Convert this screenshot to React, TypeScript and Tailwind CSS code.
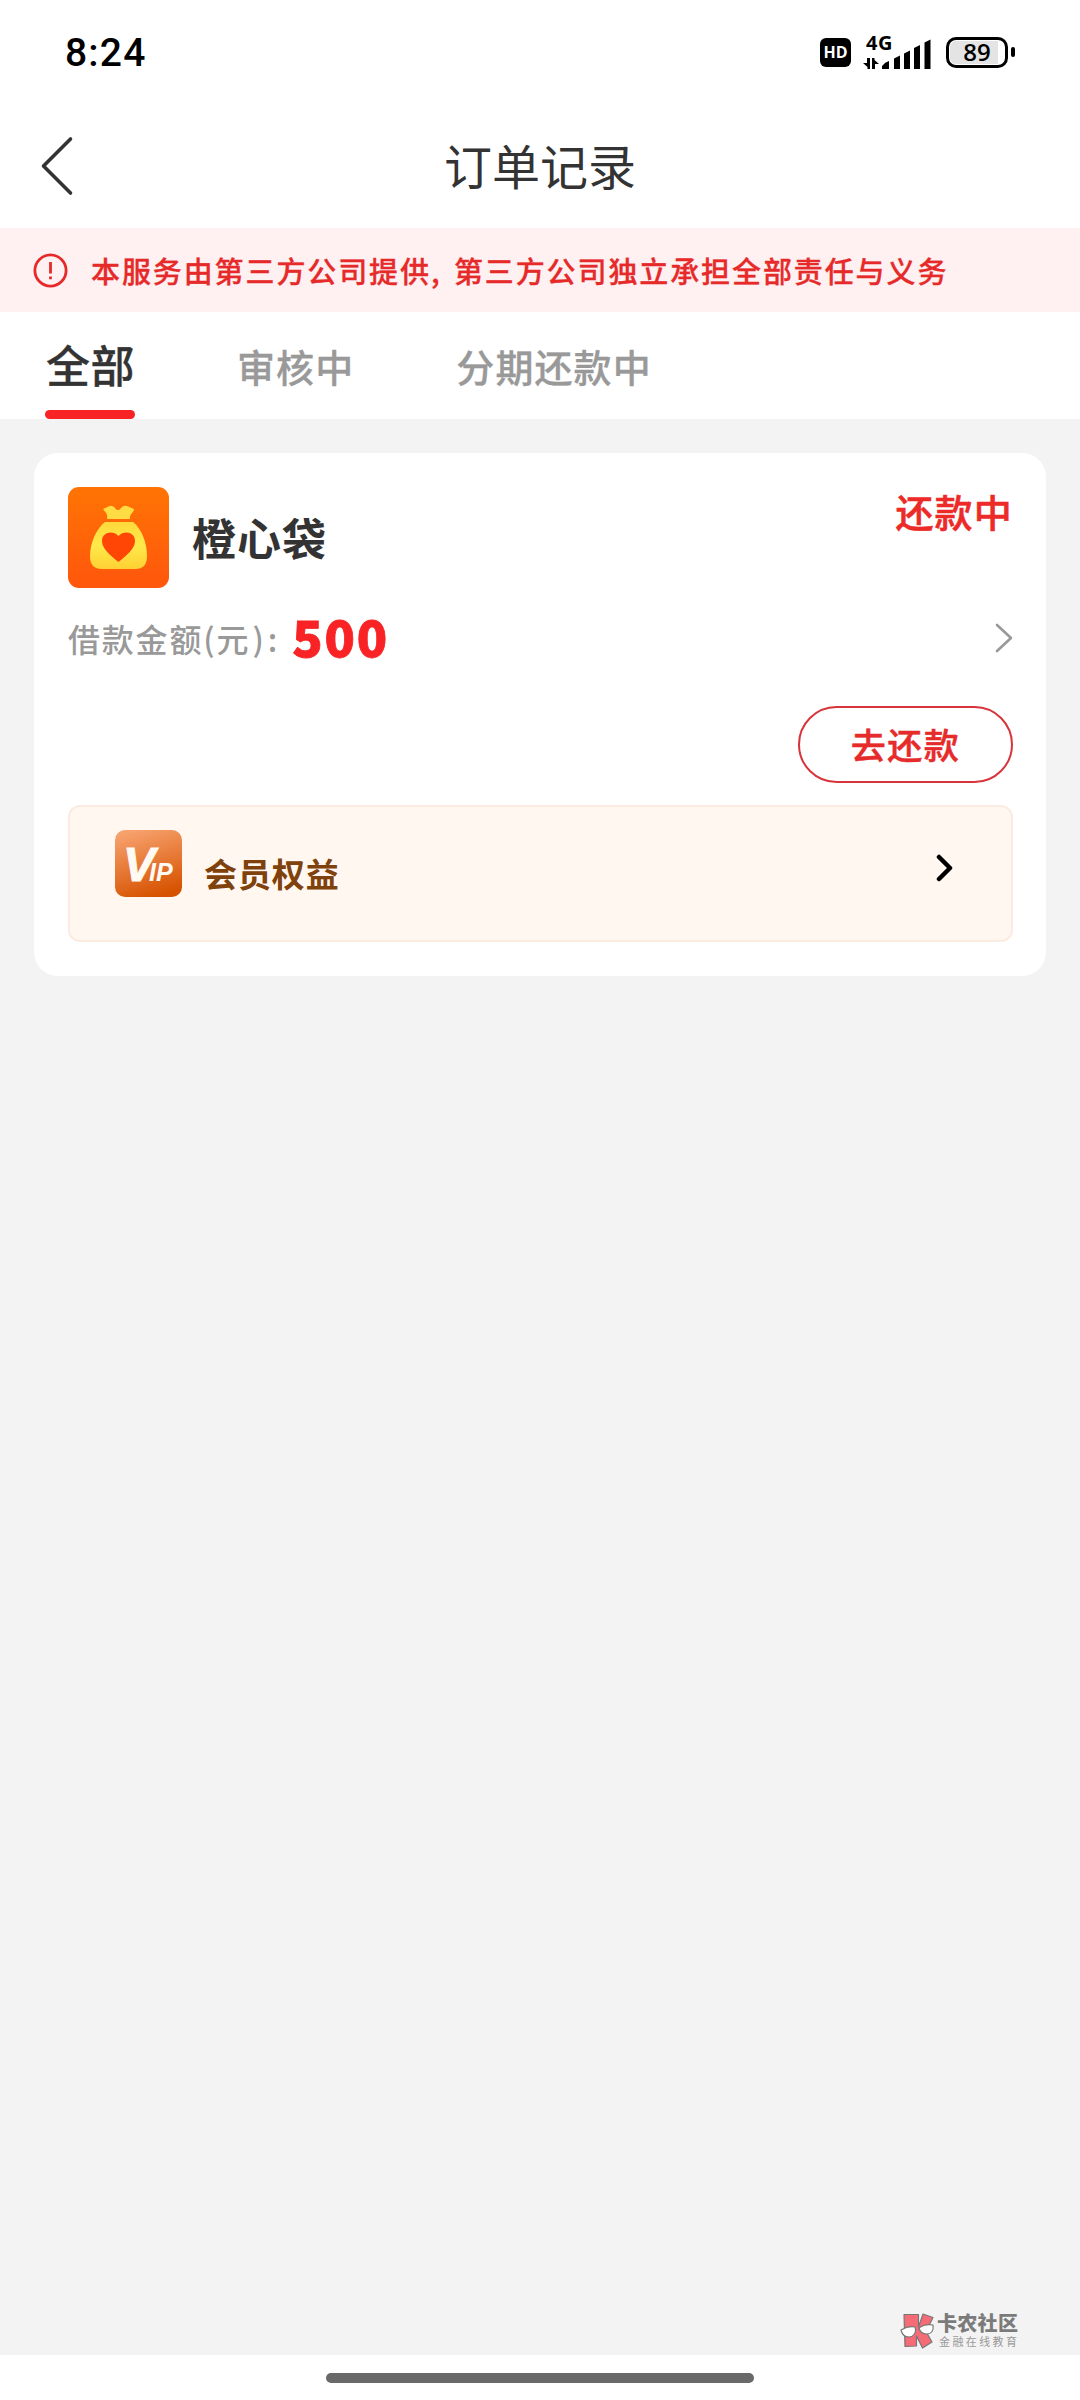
import { useState } from 'react';
import { clsx } from 'clsx';

const TABS = ['全部', '审核中', '分期还款中'];

function StatusBar() {
  return (
    <div className="flex h-[104px] items-center justify-between pr-[65px] pl-[65px] text-black">
      <span className="pt-[2px] font-['Roboto'] text-[39px] leading-[40px] font-medium tracking-[1.2px]">8:24</span>
      <div className="flex h-9 items-center">
        <div className="flex h-[29px] w-[31px] items-center justify-center rounded-md bg-black font-['Open_Sans'] text-[16px] leading-none font-bold text-white">
          HD
        </div>
        <div className="ml-3 flex h-9 w-[70px] flex-col">
          <span className="pl-[3px] font-['Open_Sans'] text-[20px] leading-[17px] font-bold tracking-[0.5px]">4G</span>
          <svg className="-mt-[15px]" width="70" height="34" viewBox="0 0 70 34">
            <path d="M7 22v11H4.500v-2L0 27h4v-5zM9 33V22h2.500v2l4.500 4h-4v5z" />
            <path d="M19 33v-3q3-4 7-5v8zM31 33V22.500l6-3V33zM41 33V17.500l6-3V33zM51 33V12l6-3V33zM61.500 33V6.500l6-3V33z" />
          </svg>
        </div>
        <div className="ml-[13px] flex h-[31px] w-[62px] rounded-[10px] border-[3px] border-black p-px">
          <div className="flex h-full w-[48px] items-center justify-center rounded-l-md bg-[#e4e4e4] pl-1.5 font-['Open_Sans'] text-[24px] leading-none font-semibold">
            89
          </div>
        </div>
        <div className="ml-[3px] h-2.5 w-1 rounded-sm bg-black" />
      </div>
    </div>
  );
}

function Header() {
  return (
    <header className="grid h-[124px] grid-cols-3 items-center pb-[5px]">
      <button type="button" className="pt-[4px] pl-10">
        <svg width="34" height="60" viewBox="0 0 34 60" fill="none" stroke="#333" strokeWidth="3.6" strokeLinecap="round" strokeLinejoin="round">
          <path d="M30.500 3 3.500 30l27 27" />
        </svg>
      </button>
      <h1 className="text-center text-[48px] leading-[60px]">订单记录</h1>
    </header>
  );
}

function Notice() {
  return (
    <div className="flex h-[84px] items-center bg-[#fff0f1] pl-[33px] text-[#e62a2a]">
      <svg width="35" height="35" viewBox="0 0 35 35" fill="none" stroke="currentColor" strokeWidth="2.8">
        <circle cx="17.500" cy="17.500" r="15.600" />
        <path d="M17.500 9v11.500M17.500 23.500v2.800" />
      </svg>
      <p className="ml-[23px] text-[29px] leading-10 font-medium tracking-[1.9px] whitespace-nowrap [-webkit-text-stroke:0.3px]">
        本服务由第三方公司提供<span className="inline-block w-[23px]">,</span>第三方公司独立承担全部责任与义务
      </p>
    </div>
  );
}

function BagIcon() {
  return (
    <svg width="101" height="101" viewBox="0 0 101 101">
      <defs>
        <linearGradient id="bag-bg" x1="0" y1="0" x2="0" y2="1">
          <stop stopColor="#ff7404" />
          <stop offset="1" stopColor="#ff560c" />
        </linearGradient>
        <linearGradient id="bag-body" x1="0" y1="0" x2="0" y2="1">
          <stop stopColor="#ffd93b" />
          <stop offset=".5" stopColor="#ffe94a" />
          <stop offset="1" stopColor="#ffd033" />
        </linearGradient>
      </defs>
      <rect width="101" height="101" rx="11" fill="url(#bag-bg)" />
      <path d="M35 22c4-1 6-4 9-3 4 1 3 4 6 4s4-5 8-4c3 0 4 2 8 3 0 4-5 5-4 10H39c1-5-1-6-4-10Z" fill="#ffdc43" />
      <path d="M37 35h28c8 6 14 20 14 34 0 9-4 13-12 13H34c-8 0-12-4-12-13 0-14 7-28 15-34Z" fill="url(#bag-body)" />
      <path d="M50.500 75C43 69 34 62 34 54c0-9 11-11 16.500-5C56 43 67 45 67 54c0 8-9 15-16.500 21Z" fill="#ff4604" />
    </svg>
  );
}

function VipIcon() {
  return (
    <svg width="67" height="67" viewBox="0 0 67 67">
      <defs>
        <linearGradient id="vip-bg" x1="0.300" y1="0" x2="0.600" y2="1">
          <stop stopColor="#f7a16d" />
          <stop offset="1" stopColor="#d65200" />
        </linearGradient>
      </defs>
      <rect width="67" height="67" rx="10" fill="url(#vip-bg)" />
      <text x="8" y="51" fill="#fffaf3" stroke="#fffaf3" fontFamily="Liberation Sans, sans-serif" fontWeight="700" fontStyle="italic" fontSize="48">
        V<tspan dx="-6" fontSize="25" strokeWidth="0">IP</tspan>
      </text>
    </svg>
  );
}

function OrderCard() {
  return (
    <section className="mx-[34px] mt-[34px] h-[523px] rounded-[24px] bg-white pt-[34px] pr-[33px] pl-[34px]">
      <div className="flex h-[101px]">
        <BagIcon />
        <h2 className="mt-5 ml-[23px] text-[44px] leading-[60px] font-bold tracking-[1px]">橙心袋</h2>
        <span className="ml-auto text-[38px] leading-[48px] font-medium tracking-[1.2px] text-[#ec2b29] [-webkit-text-stroke:0.6px]">
          还款中
        </span>
      </div>
      <div className="mt-5 flex h-[60px] items-center justify-between">
        <div className="flex items-center">
          <span className="text-[32px] leading-10 font-medium tracking-[1.8px] text-[#999]">
            借款金额(<span className="tracking-[4px]">元)</span>:
          </span>
          <span className="ml-[13px] pb-[6px] text-[50px] leading-[54px] font-black tracking-[1.8px] text-[#f92225] [-webkit-text-stroke:0.8px]">
            500
          </span>
        </div>
        <svg width="18" height="30" viewBox="0 0 18 30" fill="none" stroke="#999" strokeWidth="2.600" strokeLinecap="round" strokeLinejoin="round">
          <path d="M2 2 16 15 2 28" />
        </svg>
      </div>
      <button
        type="button"
        className="mt-[38px] ml-auto flex h-[77px] w-[215px] items-center justify-center rounded-full border-2 border-[#d8343b] pb-0.5 text-[35px] leading-none font-medium tracking-[1.5px] text-[#e62b2b] [-webkit-text-stroke:0.5px]"
      >
        去还款
      </button>
      <div className="mt-[22px] flex h-[137px] items-start justify-between rounded-[12px] border-2 border-[#fbebe0] bg-[#fff7f0] pt-[23px] pr-[57px] pl-[45px]">
        <div className="flex">
          <VipIcon />
          <span className="mt-[19px] ml-[22px] text-[33px] leading-[48px] font-bold tracking-[0.9px] text-[#7f420c]">会员权益</span>
        </div>
        <svg className="mt-6" width="18" height="28" viewBox="0 0 18 28" fill="none" stroke="#000" strokeWidth="4.500" strokeLinecap="round" strokeLinejoin="round">
          <path d="M3 3 14 14 3 25" />
        </svg>
      </div>
    </section>
  );
}

function CommunityMark() {
  return (
    <div className="mt-auto mr-[62px] mb-[5px] flex justify-end">
      <svg width="36" height="38" viewBox="0 0 36 38" stroke="#777" strokeWidth="1.200" strokeLinejoin="round">
        <path d="M4 2.500h14.500V15L23 2l10 3.500-7 14L32 30l-9.500 6L16.500 24v10L5 34.500z" fill="#f56b76" />
        <path d="M1 18c5-3 9-4 14-3 2 6-2 10-6 10s-7-3-8-7ZM19 16c4-3 9-4 14-3 1 6-2 9-6 9s-7-2-8-6Z" fill="#fff" />
      </svg>
      <div className="ml-px w-[81px] whitespace-nowrap">
        <div className="text-[20px] leading-[22px] font-black tracking-[0.3px] text-[#7b7b7b]">卡农社区</div>
        <div className="pl-0.5 text-[11px] leading-[14px] tracking-[2.4px] text-[#999]">金融在线教育</div>
      </div>
    </div>
  );
}

export default function App() {
  const [active, setActive] = useState(0);

  return (
    <div className="flex h-[2400px] w-[1080px] flex-col bg-white font-['Noto_Sans_CJK_SC',sans-serif] text-[#333]">
      <StatusBar />
      <Header />
      <Notice />
      <nav className="flex h-[107px] pl-[45px]">
        {TABS.map((tab, i) => (
          <button
            key={tab}
            type="button"
            onClick={() => setActive(i)}
            className={clsx(
              'flex flex-col items-center justify-between font-medium whitespace-nowrap [-webkit-text-stroke:0.3px]',
              i === active ? 'text-[44px] tracking-[0.5px]' : 'text-[38px] tracking-[1.1px] text-[#999]',
              i > 0 && 'ml-[102px]'
            )}
          >
            <span className={clsx('leading-[60px]', i === active ? 'mt-[22px] pl-px' : 'mt-6')}>{tab}</span>
            {i === active && <span className="h-[9px] w-[90px] rounded-full bg-[#f72325]" />}
          </button>
        ))}
      </nav>
      <main className="flex flex-1 flex-col bg-[#f3f3f3]">
        <OrderCard />
        <CommunityMark />
      </main>
      <footer className="flex h-[45px] justify-center pt-[18px]">
        <div className="h-2.5 w-[428px] rounded-full bg-[#696969]" />
      </footer>
    </div>
  );
}
